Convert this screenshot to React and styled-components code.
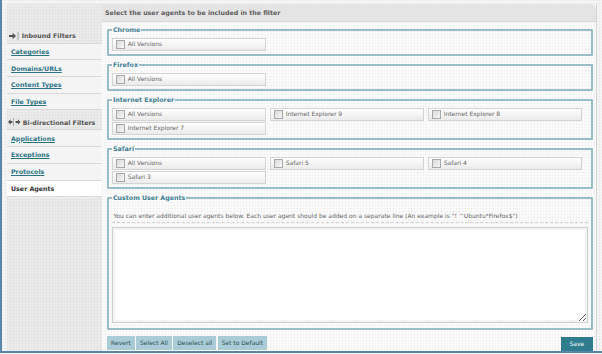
import React from 'react';
import styled, { createGlobalStyle } from 'styled-components';

const Global = createGlobalStyle`
  html, body { margin: 0; padding: 0; background: #f4f4f4; }
  body { font-family: "DejaVu Sans", Verdana, sans-serif; }
`;

const gridBg = `
  background-image:
    linear-gradient(rgba(0,0,0,0.022) 1px, transparent 1px),
    linear-gradient(90deg, rgba(0,0,0,0.022) 1px, transparent 1px);
  background-size: 3px 3px;
`;

const Frame = styled.div`
  box-sizing: border-box;
  width: 602px;
  height: 353px;
  display: flex;
  align-items: stretch;
  padding: 4px 0 0 5px;
  border-left: 2px solid #5a86ab;
  border-bottom: 2px solid #5a86ab;
  background-color: #f6f6f6;
  ${gridBg}
  overflow: hidden;
  font-family: "DejaVu Sans", Verdana, sans-serif;
`;

const Sidebar = styled.nav`
  box-sizing: border-box;
  width: 95px;
  flex: none;
  padding-top: 19.7px;
  background-color: #ececec;
  ${gridBg}
  display: flex;
  flex-direction: column;
`;

const NavHeader = styled.div`
  box-sizing: border-box;
  height: 19px;
  display: flex;
  align-items: flex-end;
  gap: ${p => p.$gap}px;
  padding: 0 0 2.5px ${p => p.$indent}px;
  font: bold 6.3px/9px "DejaVu Sans", Verdana, sans-serif;
  color: #555;
  svg { flex: none; margin-bottom: 0.5px; }
`;

const NavList = styled.div`
  border-top: 1px solid #d9d9d9;
  display: flex;
  flex-direction: column;
`;

const NavItem = styled.div`
  box-sizing: border-box;
  height: 16.7px;
  display: flex;
  align-items: center;
  padding-left: 4px;
  background: ${p => (p.$active ? '#ffffff' : '#f4f4f4')};
  border-bottom: 1px solid #d9d9d9;
  border-right: 1px solid #fafafa;
  font: bold 6.3px/9px "DejaVu Sans", Verdana, sans-serif;
  color: #333;
`;

const NavLink = styled.a`
  color: #2d7487;
  text-decoration: underline;
  cursor: pointer;
`;

const Main = styled.main`
  box-sizing: border-box;
  width: 495px;
  flex: none;
  display: flex;
  flex-direction: column;
  border-right: 1px solid #d2d2d2;
`;

const MainHeader = styled.div`
  box-sizing: border-box;
  height: 17.7px;
  display: flex;
  align-items: center;
  padding-left: 3px;
  background: #e4e4e4;
  border-top-right-radius: 6px;
  border-bottom: 1px solid #dadada;
  font: bold 6.3px/9px "DejaVu Sans", Verdana, sans-serif;
  color: #5e5e5e;
`;

const MainBody = styled.div`
  flex: 1;
  box-sizing: border-box;
  padding: 3.3px 3px 0 5px;
  background-color: #fcfcfc;
  ${gridBg}
  display: flex;
  flex-direction: column;
`;

const Group = styled.fieldset`
  margin: 0 0 3.7px;
  padding: 3.3px 3px ${p => p.$pb}px 3px;
  border: 2px solid #98bdc7;
  border-radius: 1px;
  min-width: 0;
`;

const Legend = styled.legend`
  margin-left: 0;
  padding: 0 1px;
  font: bold 6.3px/10px "DejaVu Sans", Verdana, sans-serif;
  color: #3f8093;
`;

const Options = styled.div`
  display: flex;
  flex-wrap: wrap;
  gap: 1.5px 4px;
`;

const Option = styled.label`
  box-sizing: border-box;
  width: 154px;
  height: 12.5px;
  display: flex;
  align-items: center;
  gap: 2.7px;
  padding-left: 3px;
  border: 1px solid #d4d4d4;
  background: linear-gradient(#ffffff, #ebebeb);
  font: 6px/8px "DejaVu Sans", Verdana, sans-serif;
  color: #666;
`;

const Check = styled.span`
  box-sizing: border-box;
  width: 9px;
  height: 9px;
  flex: none;
  border: 1px solid #a8a8a8;
  background: linear-gradient(135deg, #dcdcdc, #f6f6f6);
`;

const Desc = styled.div`
  padding: 4.5px 0 2.5px 1.5px;
  border-bottom: 1px dashed #cfcfcf;
  font: 6px/9px "DejaVu Sans", Verdana, sans-serif;
  color: #666;
  white-space: nowrap;
`;

const Agents = styled.textarea`
  display: block;
  box-sizing: border-box;
  width: 476px;
  height: 96px;
  margin-top: 3.6px;
  border: 1px solid #cfcfcf;
  box-shadow: inset 0 0 0 2px #f4f4f4;
  background: #fff;
  resize: vertical;
  outline: none;
`;

const ButtonBar = styled.div`
  display: flex;
  align-items: flex-start;
  gap: 1.7px;
  margin-top: 2.3px;
  padding-left: 0.3px;
`;

const Button = styled.button`
  box-sizing: border-box;
  height: 14px;
  padding: 0 3.8px;
  margin: ${p => (p.$primary ? '1px 0 0 auto' : '0')};
  border: none;
  background: ${p => (p.$primary ? '#2f7c8f' : '#a9ccd6')};
  color: ${p => (p.$primary ? '#ffffff' : '#2f4f5a')};
  font: 6px/14px "DejaVu Sans", Verdana, sans-serif;
  ${p => (p.$primary ? 'width: 32.3px;' : '')}
`;

const InboundIcon = () => (
  <svg width="10" height="8" viewBox="0 0 10 8">
    <path d="M0 3h3.6V0.8L7 4 3.6 7.2V5H0z" fill="#555" />
    <rect x="8.6" y="0" width="0.9" height="8" fill="#9a9a9a" />
  </svg>
);

const BiIcon = () => (
  <svg width="12.5" height="8" viewBox="0 0 12.5 8">
    <path d="M0 4L2.6 1.2V3H4.4V5H2.6V6.8z" fill="#555" />
    <rect x="5.2" y="0" width="0.8" height="8" fill="#9a9a9a" />
    <path d="M12.5 4L9.9 1.2V3H7.6V5H9.9V6.8z" fill="#555" />
  </svg>
);

const browsers = [
  { name: 'Chrome', versions: ['All Versions'] },
  { name: 'Firefox', versions: ['All Versions'] },
  {
    name: 'Internet Explorer',
    versions: ['All Versions', 'Internet Explorer 9', 'Internet Explorer 8', 'Internet Explorer 7'],
  },
  { name: 'Safari', versions: ['All Versions', 'Safari 5', 'Safari 4', 'Safari 3'] },
];

export default function App() {
  return (
    <>
      <Global />
      <Frame>
        <Sidebar>
          <NavHeader $indent={2} $gap={2.7}>
            <InboundIcon />
            Inbound Filters
          </NavHeader>
          <NavList>
            {['Categories', 'Domains/URLs', 'Content Types', 'File Types'].map(t => (
              <NavItem key={t}>
                <NavLink>{t}</NavLink>
              </NavItem>
            ))}
          </NavList>
          <NavHeader $indent={1.3} $gap={1.9}>
            <BiIcon />
            Bi-directional Filters
          </NavHeader>
          <NavList>
            {['Applications', 'Exceptions', 'Protocols'].map(t => (
              <NavItem key={t}>
                <NavLink>{t}</NavLink>
              </NavItem>
            ))}
            <NavItem $active>User Agents</NavItem>
          </NavList>
        </Sidebar>
        <Main>
          <MainHeader>Select the user agents to be included in the filter</MainHeader>
          <MainBody>
            {browsers.map(b => (
              <Group key={b.name} $pb={3.5}>
                <Legend>{b.name}</Legend>
                <Options>
                  {b.versions.map(v => (
                    <Option key={v}>
                      <Check />
                      {v}
                    </Option>
                  ))}
                </Options>
              </Group>
            ))}
            <Group $pb={5.4}>
              <Legend>Custom User Agents</Legend>
              <Desc>
                You can enter additional user agents below. Each user agent should be added on a
                separate line (An example is "! ^Ubuntu*Firefox$")
              </Desc>
              <Agents />
            </Group>
            <ButtonBar>
              <Button>Revert</Button>
              <Button>Select All</Button>
              <Button>Deselect all</Button>
              <Button>Set to Default</Button>
              <Button $primary>Save</Button>
            </ButtonBar>
          </MainBody>
        </Main>
      </Frame>
    </>
  );
}
